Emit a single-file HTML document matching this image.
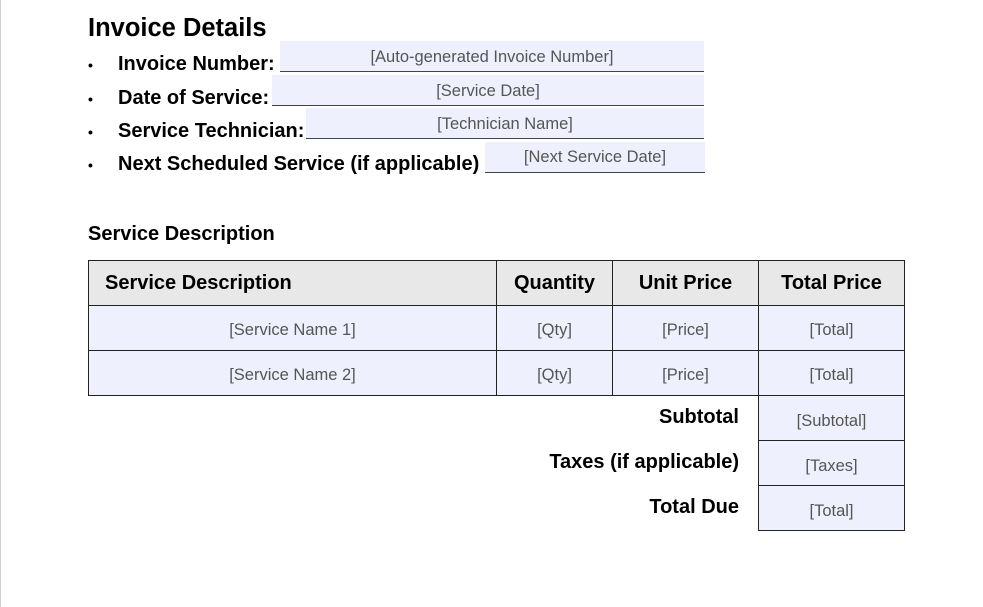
<!DOCTYPE html>
<html><head><style>
body{margin:0;width:983px;height:607px;background:#fff;position:relative;overflow:hidden;font-family:"Liberation Sans",sans-serif;}
.edge{position:absolute;left:0;top:0;width:1px;height:607px;background:#d0d0d0}
.a{position:absolute;white-space:nowrap}
.b{font-weight:bold;color:#000}
.f{position:absolute;background:#eef1fd;border-bottom:1px solid #444;color:#555;font-size:16.5px;text-align:center;box-sizing:border-box}
.c{position:absolute;box-sizing:border-box;border:1px solid #222;display:flex;align-items:center;justify-content:center;font-size:16.5px;color:#555;background:#eef1fd;padding-top:5px}
.h{background:#e8e8e9;color:#000;font-weight:bold;font-size:20px;padding-top:0}
.l{font-size:20px}
.bu{font-size:14px}
</style></head><body>
<div class="edge"></div>
<div class="a b" style="left:88px;top:14px;font-size:25.5px">Invoice Details</div>

<div class="a b bu" style="left:88px;top:57px">•</div>
<div class="a b l" style="left:118px;top:53px">Invoice Number:</div>
<div class="f" style="left:280px;top:41px;width:424px;height:31px;padding-top:7px">[Auto-generated Invoice Number]</div>

<div class="a b bu" style="left:88px;top:91px">•</div>
<div class="a b l" style="left:118px;top:87px">Date of Service:</div>
<div class="f" style="left:272px;top:75px;width:432px;height:31px;padding-top:7px">[Service Date]</div>

<div class="a b bu" style="left:88px;top:124px">•</div>
<div class="a b l" style="left:118px;top:120px">Service Technician:</div>
<div class="f" style="left:306px;top:108px;width:398px;height:31px;padding-top:7px">[Technician Name]</div>

<div class="a b bu" style="left:88px;top:157px">•</div>
<div class="a b l" style="left:118px;top:153px">Next Scheduled Service (if applicable)</div>
<div class="f" style="left:485px;top:142px;width:220px;height:31px;padding-top:6px">[Next Service Date]</div>

<div class="a b" style="left:88px;top:223px;font-size:20px">Service Description</div>

<div class="c h" style="left:88px;top:260px;width:409px;height:46px;justify-content:flex-start;padding-left:16px">Service Description</div>
<div class="c h" style="left:496px;top:260px;width:117px;height:46px">Quantity</div>
<div class="c h" style="left:612px;top:260px;width:147px;height:46px">Unit Price</div>
<div class="c h" style="left:758px;top:260px;width:147px;height:46px">Total Price</div>

<div class="c" style="left:88px;top:305px;width:409px;height:46px">[Service Name 1]</div>
<div class="c" style="left:496px;top:305px;width:117px;height:46px">[Qty]</div>
<div class="c" style="left:612px;top:305px;width:147px;height:46px">[Price]</div>
<div class="c" style="left:758px;top:305px;width:147px;height:46px">[Total]</div>

<div class="c" style="left:88px;top:350px;width:409px;height:46px">[Service Name 2]</div>
<div class="c" style="left:496px;top:350px;width:117px;height:46px">[Qty]</div>
<div class="c" style="left:612px;top:350px;width:147px;height:46px">[Price]</div>
<div class="c" style="left:758px;top:350px;width:147px;height:46px">[Total]</div>

<div class="a b" style="right:244px;top:406px;font-size:20px">Subtotal</div>
<div class="a b" style="right:244px;top:451px;font-size:20px">Taxes (if applicable)</div>
<div class="a b" style="right:244px;top:496px;font-size:20px">Total Due</div>
<div class="c" style="left:758px;top:395px;width:147px;height:46px;padding-top:7px">[Subtotal]</div>
<div class="c" style="left:758px;top:440px;width:147px;height:46px;padding-top:7px">[Taxes]</div>
<div class="c" style="left:758px;top:485px;width:147px;height:46px;padding-top:7px">[Total]</div>
</body></html>
